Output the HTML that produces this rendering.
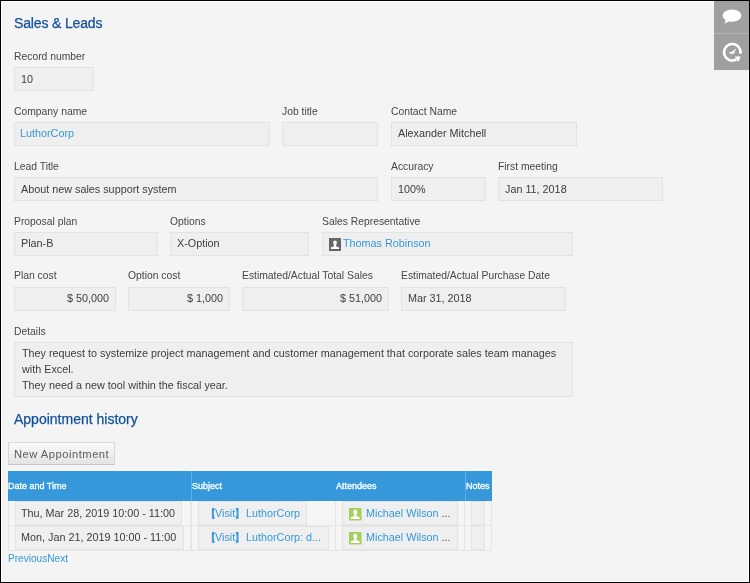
<!DOCTYPE html>
<html><head><meta charset="utf-8"><style>
html,body{margin:0;padding:0;}
body{width:750px;height:583px;overflow:hidden;position:relative;background:#f4f4f4;font-family:"Liberation Sans",sans-serif;}
.frame{position:absolute;left:0;top:0;width:750px;height:583px;box-sizing:border-box;border:1px solid #000;}
.frame2{position:absolute;left:1px;top:1px;width:748px;height:581px;box-sizing:border-box;border:1px solid #fff;}
.t{position:absolute;line-height:1;white-space:pre;will-change:transform;}
.b{position:absolute;box-sizing:border-box;}
</style></head><body>
<div class="frame2"></div>
<div class="b" style="left:8px;top:32px;width:110px;height:1px;background:#f1f1f1;"></div>
<span class="t" style="left:13.6px;top:16.15px;font-size:14px;color:#11509a;font-weight:normal;letter-spacing:-0.15px;-webkit-text-stroke:0.25px #11509a;">Sales &amp; Leads</span>
<span class="t" style="left:14px;top:51.69px;font-size:10.35px;color:#474747;font-weight:normal;">Record number</span>
<div class="b" style="left:14px;top:67px;width:80px;height:24px;background:#efefef;border:1px solid #e3e3e3;"></div>
<span class="t" style="left:21px;top:73.86px;font-size:10.8px;color:#3c3c3c;font-weight:normal;">10</span>
<span class="t" style="left:14px;top:106.69px;font-size:10.35px;color:#474747;font-weight:normal;">Company name</span>
<div class="b" style="left:14px;top:122px;width:256px;height:24px;background:#efefef;border:1px solid #e3e3e3;"></div>
<span class="t" style="left:19.9px;top:127.86px;font-size:10.8px;color:#3498db;font-weight:normal;">LuthorCorp</span>
<span class="t" style="left:282px;top:106.69px;font-size:10.35px;color:#474747;font-weight:normal;">Job title</span>
<div class="b" style="left:282px;top:122px;width:96px;height:24px;background:#efefef;border:1px solid #e3e3e3;"></div>
<span class="t" style="left:391px;top:106.69px;font-size:10.35px;color:#474747;font-weight:normal;">Contact Name</span>
<div class="b" style="left:391px;top:122px;width:186px;height:24px;background:#efefef;border:1px solid #e3e3e3;"></div>
<span class="t" style="left:398px;top:127.86px;font-size:10.8px;color:#3c3c3c;font-weight:normal;">Alexander Mitchell</span>
<span class="t" style="left:14px;top:161.69px;font-size:10.35px;color:#474747;font-weight:normal;">Lead Title</span>
<div class="b" style="left:14px;top:177px;width:364px;height:24px;background:#efefef;border:1px solid #e3e3e3;"></div>
<span class="t" style="left:21px;top:183.86px;font-size:10.8px;color:#3c3c3c;font-weight:normal;">About new sales support system</span>
<span class="t" style="left:391px;top:161.69px;font-size:10.35px;color:#474747;font-weight:normal;">Accuracy</span>
<div class="b" style="left:391px;top:177px;width:95px;height:24px;background:#efefef;border:1px solid #e3e3e3;"></div>
<span class="t" style="left:398px;top:183.86px;font-size:10.8px;color:#3c3c3c;font-weight:normal;">100%</span>
<span class="t" style="left:498px;top:161.69px;font-size:10.35px;color:#474747;font-weight:normal;">First meeting</span>
<div class="b" style="left:498px;top:177px;width:165px;height:24px;background:#efefef;border:1px solid #e3e3e3;"></div>
<span class="t" style="left:505px;top:183.86px;font-size:10.8px;color:#3c3c3c;font-weight:normal;">Jan 11, 2018</span>
<span class="t" style="left:14px;top:216.69px;font-size:10.35px;color:#474747;font-weight:normal;">Proposal plan</span>
<div class="b" style="left:14px;top:232px;width:144px;height:24px;background:#efefef;border:1px solid #e3e3e3;"></div>
<span class="t" style="left:21px;top:237.86px;font-size:10.8px;color:#3c3c3c;font-weight:normal;">Plan-B</span>
<span class="t" style="left:170px;top:216.69px;font-size:10.35px;color:#474747;font-weight:normal;">Options</span>
<div class="b" style="left:170px;top:232px;width:139px;height:24px;background:#efefef;border:1px solid #e3e3e3;"></div>
<span class="t" style="left:177px;top:237.86px;font-size:10.8px;color:#3c3c3c;font-weight:normal;">X-Option</span>
<span class="t" style="left:322px;top:216.69px;font-size:10.35px;color:#474747;font-weight:normal;">Sales Representative</span>
<div class="b" style="left:322px;top:232px;width:251px;height:24px;background:#efefef;border:1px solid #e3e3e3;"></div>
<span class="t" style="left:342.7px;top:237.86px;font-size:10.8px;color:#3498db;font-weight:normal;">Thomas Robinson</span>
<span class="t" style="left:14px;top:270.69px;font-size:10.35px;color:#474747;font-weight:normal;">Plan cost</span>
<div class="b" style="left:14px;top:287px;width:102px;height:24px;background:#efefef;border:1px solid #e3e3e3;"></div>
<span class="t" style="right:641px;top:292.86px;font-size:10.8px;color:#3c3c3c;font-weight:normal;">$ 50,000</span>
<span class="t" style="left:128px;top:270.69px;font-size:10.35px;color:#474747;font-weight:normal;">Option cost</span>
<div class="b" style="left:128px;top:287px;width:102px;height:24px;background:#efefef;border:1px solid #e3e3e3;"></div>
<span class="t" style="right:527px;top:292.86px;font-size:10.8px;color:#3c3c3c;font-weight:normal;">$ 1,000</span>
<span class="t" style="left:242px;top:270.69px;font-size:10.35px;color:#474747;font-weight:normal;">Estimated/Actual Total Sales</span>
<div class="b" style="left:242px;top:287px;width:147px;height:24px;background:#efefef;border:1px solid #e3e3e3;"></div>
<span class="t" style="right:368px;top:292.86px;font-size:10.8px;color:#3c3c3c;font-weight:normal;">$ 51,000</span>
<span class="t" style="left:401px;top:270.69px;font-size:10.35px;color:#474747;font-weight:normal;">Estimated/Actual Purchase Date</span>
<div class="b" style="left:401px;top:287px;width:165px;height:24px;background:#efefef;border:1px solid #e3e3e3;"></div>
<span class="t" style="left:408px;top:292.86px;font-size:10.8px;color:#3c3c3c;font-weight:normal;">Mar 31, 2018</span>
<svg class="b" style="left:329px;top:238px" width="12" height="13" viewBox="0 0 12 13"><rect width="12" height="13" fill="#666"/><ellipse cx="6" cy="4.7" rx="1.9" ry="2.3" fill="#fff"/><path d="M4.9 6.6 L7.1 6.6 L7.2 8.5 C9 8.8 10.2 9.2 10.2 10.2 L10.2 11 L1.8 11 L1.8 10.2 C1.8 9.2 3 8.8 4.8 8.5 Z" fill="#fff"/></svg>
<span class="t" style="left:14px;top:326.69px;font-size:10.35px;color:#474747;font-weight:normal;">Details</span>
<div class="b" style="left:14px;top:342px;width:559px;height:55px;background:#efefef;border:1px solid #e3e3e3;"></div>
<span class="t" style="left:21.5px;top:347.86px;font-size:10.8px;color:#3c3c3c;font-weight:normal;">They request to systemize project management and customer management that corporate sales team manages</span>
<span class="t" style="left:21.5px;top:363.86px;font-size:10.8px;color:#3c3c3c;font-weight:normal;">with Excel.</span>
<span class="t" style="left:21.5px;top:379.86px;font-size:10.8px;color:#3c3c3c;font-weight:normal;">They need a new tool within the fiscal year.</span>
<span class="t" style="left:14px;top:412.15px;font-size:14px;color:#11509a;font-weight:normal;-webkit-text-stroke:0.25px #11509a;">Appointment history</span>
<div class="b" style="left:8px;top:442px;width:107px;height:23px;border:1px solid;border-color:#dcdcdc #d6d6d6 #c4c4c4 #d6d6d6;background:linear-gradient(#f9f9f9,#e4e4e4);"></div>
<span class="t" style="left:14px;top:448.52px;font-size:11.2px;color:#5c5c5c;font-weight:normal;letter-spacing:0.5px;">New Appointment</span>
<div class="b" style="left:8px;top:471px;width:484px;height:30px;background:#3498db;"></div>
<div class="b" style="left:191px;top:471px;width:1px;height:30px;background:#5fb0e6;"></div>
<div class="b" style="left:465px;top:471px;width:1px;height:30px;background:#5fb0e6;"></div>
<span class="t" style="left:8px;top:482.18px;font-size:9px;color:#fff;font-weight:normal;-webkit-text-stroke:0.3px #fff;">Date and Time</span>
<span class="t" style="left:191.5px;top:482.18px;font-size:9px;color:#fff;font-weight:normal;-webkit-text-stroke:0.3px #fff;">Subject</span>
<span class="t" style="left:335.5px;top:482.18px;font-size:9px;color:#fff;font-weight:normal;-webkit-text-stroke:0.3px #fff;">Attendees</span>
<span class="t" style="left:465.5px;top:482.18px;font-size:9px;color:#fff;font-weight:normal;-webkit-text-stroke:0.3px #fff;">Notes</span>
<div class="b" style="left:8px;top:501px;width:484px;height:50px;background:#f5f5f5;"></div>
<div class="b" style="left:8px;top:501px;width:1px;height:50px;background:#e6e6e6;"></div>
<div class="b" style="left:190px;top:501px;width:1px;height:50px;background:#e6e6e6;"></div>
<div class="b" style="left:191px;top:501px;width:1px;height:50px;background:#e6e6e6;"></div>
<div class="b" style="left:335px;top:501px;width:1px;height:50px;background:#e6e6e6;"></div>
<div class="b" style="left:464px;top:501px;width:1px;height:50px;background:#e6e6e6;"></div>
<div class="b" style="left:491px;top:501px;width:1px;height:50px;background:#e6e6e6;"></div>
<div class="b" style="left:8px;top:525px;width:484px;height:1px;background:#e6e6e6;"></div>
<div class="b" style="left:8px;top:550px;width:484px;height:1px;background:#e6e6e6;"></div>
<div class="b" style="left:15px;top:501px;width:167px;height:24px;background:#efefef;border:1px solid #e3e3e3;"></div>
<div class="b" style="left:15px;top:526px;width:169px;height:24px;background:#efefef;border:1px solid #e3e3e3;"></div>
<div class="b" style="left:198px;top:501px;width:109px;height:24px;background:#efefef;border:1px solid #e3e3e3;"></div>
<div class="b" style="left:198px;top:526px;width:131px;height:24px;background:#efefef;border:1px solid #e3e3e3;"></div>
<div class="b" style="left:342px;top:501px;width:116px;height:24px;background:#efefef;border:1px solid #e3e3e3;"></div>
<div class="b" style="left:342px;top:526px;width:116px;height:24px;background:#efefef;border:1px solid #e3e3e3;"></div>
<div class="b" style="left:471px;top:501px;width:14px;height:24px;background:#efefef;border:1px solid #e3e3e3;"></div>
<div class="b" style="left:471px;top:526px;width:14px;height:24px;background:#efefef;border:1px solid #e3e3e3;"></div>
<span class="t" style="left:21.3px;top:507.86px;font-size:10.8px;color:#3c3c3c;font-weight:normal;">Thu, Mar 28, 2019 10:00 - 11:00</span>
<span class="t" style="left:21.3px;top:531.86px;font-size:10.8px;color:#3c3c3c;font-weight:normal;">Mon, Jan 21, 2019 10:00 - 11:00</span>
<span class="t" style="left:246.3px;top:507.86px;font-size:10.8px;color:#3498db;font-weight:normal;">LuthorCorp</span>
<span class="t" style="left:246.3px;top:531.86px;font-size:10.8px;color:#3498db;font-weight:normal;">LuthorCorp: d...</span>
<svg class="b" style="left:211px;top:508px" width="29" height="12" viewBox="0 0 29 12"><path d="M0.9 0.1 L3.9 0.1 C2.3 3.2 2.3 7.6 3.9 10.7 L0.9 10.7 Z" fill="#3498db"/><path d="M27.5 0.1 L24.5 0.1 C26.1 3.2 26.1 7.6 24.5 10.7 L27.5 10.7 Z" fill="#3498db"/></svg>
<svg class="b" style="left:211px;top:532px" width="29" height="12" viewBox="0 0 29 12"><path d="M0.9 0.1 L3.9 0.1 C2.3 3.2 2.3 7.6 3.9 10.7 L0.9 10.7 Z" fill="#3498db"/><path d="M27.5 0.1 L24.5 0.1 C26.1 3.2 26.1 7.6 24.5 10.7 L27.5 10.7 Z" fill="#3498db"/></svg>
<span class="t" style="left:215.1px;top:507.86px;font-size:10.8px;color:#3498db;font-weight:normal;">Visit</span>
<span class="t" style="left:215.1px;top:531.86px;font-size:10.8px;color:#3498db;font-weight:normal;">Visit</span>
<svg class="b" style="left:349px;top:508px" width="12.5" height="12.5" viewBox="0 0 12.5 12.5"><rect width="12.5" height="12.5" rx="1" fill="#a3cf5b"/><ellipse cx="6.3" cy="4.1" rx="2.1" ry="2.5" fill="#fff"/><path d="M5.1 6.2 L7.5 6.2 L7.6 8.2 C9.6 8.5 10.9 9.1 10.9 10.1 L10.9 11 L1.7 11 L1.7 10.1 C1.7 9.1 3 8.5 5 8.2 Z" fill="#fff"/></svg>
<svg class="b" style="left:349px;top:532px" width="12.5" height="12.5" viewBox="0 0 12.5 12.5"><rect width="12.5" height="12.5" rx="1" fill="#a3cf5b"/><ellipse cx="6.3" cy="4.1" rx="2.1" ry="2.5" fill="#fff"/><path d="M5.1 6.2 L7.5 6.2 L7.6 8.2 C9.6 8.5 10.9 9.1 10.9 10.1 L10.9 11 L1.7 11 L1.7 10.1 C1.7 9.1 3 8.5 5 8.2 Z" fill="#fff"/></svg>
<span class="t" style="left:366.1px;top:507.86px;font-size:10.8px;color:#3498db;font-weight:normal;">Michael Wilson <span style="color:#555">...</span></span>
<span class="t" style="left:366.1px;top:531.86px;font-size:10.8px;color:#3498db;font-weight:normal;">Michael Wilson <span style="color:#555">...</span></span>
<span class="t" style="left:8px;top:554.45px;font-size:10.1px;color:#3498db;font-weight:normal;">PreviousNext</span>
<div class="b" style="left:714px;top:1px;width:35px;height:69px;background:#a0a0a0;"></div>
<div class="b" style="left:714px;top:33px;width:35px;height:1px;background:#b4b4b4;"></div>
<svg class="b" style="left:714px;top:1px" width="35" height="70" viewBox="0 0 35 70"><ellipse cx="18" cy="14.6" rx="9.4" ry="6.2" fill="#fff"/><path d="M12 18 L10.5 22.8 L16.5 19.5Z" fill="#fff"/><path d="M26.43 52.67 A8.25 8.25 0 1 0 22.48 58.41" fill="none" stroke="#fff" stroke-width="2.5"/><path d="M20.8 55.4 L26.6 55.4 L24.4 60.9Z" fill="#fff"/><path d="M15 51.2 L18.2 50.8 L22.3 47.3 L19.6 52.9 L15.2 52.2 Z" fill="#fff"/></svg>
<div class="frame"></div>
</body></html>
